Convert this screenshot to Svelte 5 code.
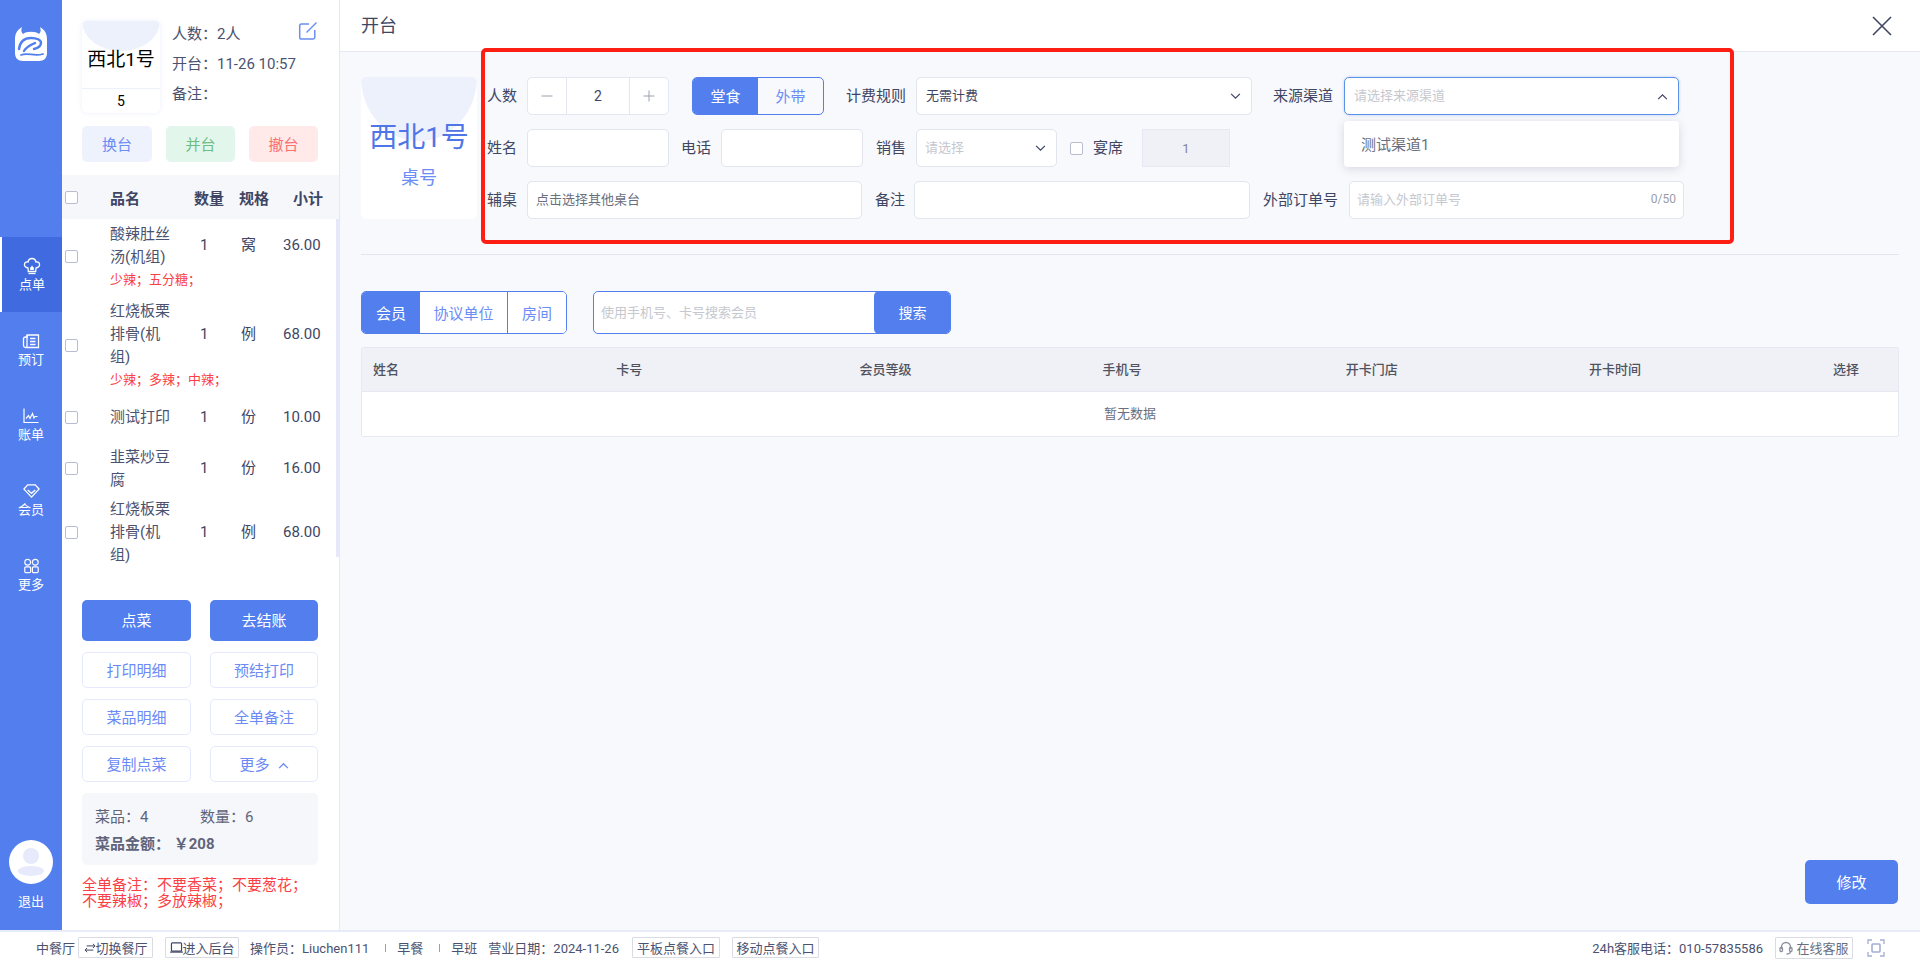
<script>
  const items = [
    { name: '酸辣肚丝汤(机组)', qty: 1, unit: '窝', price: '36.00', note: '少辣；五分糖；' },
    { name: '红烧板栗排骨(机组)', qty: 1, unit: '例', price: '68.00', note: '少辣；多辣；中辣；' },
    { name: '测试打印', qty: 1, unit: '份', price: '10.00', single: true },
    { name: '韭菜炒豆腐', qty: 1, unit: '份', price: '16.00' },
    { name: '红烧板栗排骨(机组)', qty: 1, unit: '例', price: '68.00' }
  ];
  const cols = ['姓名', '卡号', '会员等级', '手机号', '开卡门店', '开卡时间'];
</script>

<div class="page">
  <div class="top">
    <aside class="nav">
      <svg class="logo" viewBox="0 0 34 36" aria-hidden="true">
        <path fill="#fff" d="M8 1C3 4 1 8 1 13V27C1 32 4 35 9 35H25C30 35 33 32 33 27V13C33 8 31 4 26 1C27 4 27 6 25 8C22 5 12 5 9 8C7 6 7 4 8 1Z"/>
        <g fill="none" stroke="#527eee" stroke-linecap="round">
          <path stroke-width="2.400" d="M5 23C6 16 10 12 17 12C23 12 27 14 27 17C27 20 24 22 20 23"/>
          <path stroke-width="2.400" d="M10 25C13 20 17 19 21 17"/>
          <path stroke-width="1.800" d="M7 29C14 26 20 31 29 28"/>
        </g>
      </svg>
      <div class="nav-list">
        <div class="nav-item active">
          <svg viewBox="0 0 18 18" width="18" height="18" fill="none" stroke="#fff" stroke-width="1.300"><path d="M5 11C2.500 10.500 1 9 1.500 6.800 2 5 4 4.500 5 5 5.500 2.500 7.500 1.500 9 1.500S12.500 2.500 13 5c1-.5 3 0 3.500 1.800C17 9 15.500 10.500 13 11l-.3 3.500H5.300z"/><path d="M5.500 16.500h7" /><path fill="#fff" stroke="none" d="M7 11l2-2.500 2 2.500-.3 2H7.300z"/></svg>
          <span>点单</span>
        </div>
        <div class="nav-item">
          <svg viewBox="0 0 18 18" width="18" height="18" fill="none" stroke="#fff" stroke-width="1.300"><path d="M5 3h11.500v12.500H3.500A2 2 0 0 1 1.500 13.500V6.500A2 2 0 0 1 3.500 5H5z"/><path d="M5 3v12.500M8 6.500h5.500M8 9.500h5.500M8 12.500h5.500"/></svg>
          <span>预订</span>
        </div>
        <div class="nav-item chart">
          <svg viewBox="0 0 16 16" width="16" height="16" fill="none" stroke="#fff" stroke-width="1.200"><path d="M1 .5v14h14.500"/><path d="M3 10.500l2.500-3 1.500 3 2.500-5 1.500 4.500 1-1.500h2.500"/></svg>
          <span>账单</span>
        </div>
        <div class="nav-item gem">
          <svg viewBox="0 0 18 16" width="17" height="15" fill="none" stroke="#fff" stroke-width="1.400"><path d="M5 1.500h8l4 4.500-8 8.500-8-8.500z"/><path d="M5 7l4 3.500L13 7"/></svg>
          <span>会员</span>
        </div>
        <div class="nav-item more">
          <svg viewBox="0 0 15 15" width="15" height="15" fill="none" stroke="#fff" stroke-width="1.200"><circle cx="3.700" cy="3.700" r="2.900"/><circle cx="11.300" cy="3.700" r="2.900"/><rect x=".8" y="8.300" width="5.800" height="5.800" rx="1.200"/><rect x="8.400" y="8.300" width="5.800" height="5.800" rx="1.200"/></svg>
          <span>更多</span>
        </div>
      </div>
      <div class="logout">
        <div class="avatar">
          <svg viewBox="0 0 44 44" width="44" height="44"><circle cx="22" cy="16" r="8" fill="#e7eafa"/><ellipse cx="22" cy="31" rx="13" ry="5" fill="#e7eafa"/></svg>
        </div>
        <span>退出</span>
      </div>
    </aside>

    <section class="panel">
      <div class="table-info">
        <div class="table-card">
          <div class="cap"></div>
          <div class="tname">西北1号</div>
          <div class="tnum">5</div>
        </div>
        <div class="info-lines">
          <div>人数：2人</div>
          <div>开台：11-26 10:57</div>
          <div>备注：</div>
        </div>
        <svg class="edit" viewBox="0 0 20 20" width="20" height="20" fill="none" stroke="#6b8ff2" stroke-width="1.500"><path d="M11 3H3.500A1.800 1.800 0 0 0 1.700 4.800v11.500a1.800 1.800 0 0 0 1.800 1.800H15a1.800 1.800 0 0 0 1.800-1.800V9"/><path d="M8.500 11.500L18.500 1.500"/></svg>
      </div>
      <div class="tint-btns">
        <button class="t-blue">换台</button>
        <button class="t-green">并台</button>
        <button class="t-red">撤台</button>
      </div>
      <div class="list-head">
        <span class="cb"></span>
        <span class="h-name">品名</span>
        <span class="h-qty">数量</span>
        <span class="h-unit">规格</span>
        <span class="h-sub">小计</span>
      </div>
      <div class="list">
        <div class="scrollbar"></div>
        {#each items as it}
          <div class="row" class:single={it.single} class:noted={it.note}>
            <span class="cb"></span>
            <span class="r-name">{it.name}</span>
            <span class="r-qty">{it.qty}</span>
            <span class="r-unit">{it.unit}</span>
            <span class="r-price">{it.price}</span>
            {#if it.note}<span class="r-note">{it.note}</span>{/if}
          </div>
        {/each}
      </div>
      <div class="actions">
        <button class="solid h41">点菜</button>
        <button class="solid h41">去结账</button>
        <button class="outline">打印明细</button>
        <button class="outline">预结打印</button>
        <button class="outline">菜品明细</button>
        <button class="outline">全单备注</button>
        <button class="outline">复制点菜</button>
        <button class="outline">更多<svg viewBox="0 0 12 8" width="11" height="7" fill="none" stroke="#6b8af5" stroke-width="1.500"><path d="M1 7l5-5 5 5"/></svg></button>
      </div>
      <div class="summary">
        <div class="sum-top"><span>菜品：4</span><span>数量：6</span></div>
        <div class="sum-total">菜品金额： ￥208</div>
      </div>
      <div class="order-note">全单备注：不要香菜；不要葱花；不要辣椒；多放辣椒；</div>
    </section>

    <main class="main">
      <header class="bar">
        <span>开台</span>
        <svg viewBox="0 0 20 20" width="20" height="20" fill="none" stroke="#3f4664" stroke-width="1.600"><path d="M1 1l18 18M19 1L1 19"/></svg>
      </header>
      <div class="content">
        <div class="open-row">
          <div class="big-card">
            <div class="big-cap"></div>
            <div class="big-name">西北1号</div>
            <div class="big-sub">桌号</div>
          </div>
          <div class="form">
            <div class="f-row">
              <label class="l1">人数</label>
              <div class="stepper">
                <span class="st-btn"><svg viewBox="0 0 12 12" width="12" height="12" stroke="#9ba0ad" stroke-width="1"><path d="M.5 6h11"/></svg></span>
                <span class="st-val">2</span>
                <span class="st-btn"><svg viewBox="0 0 12 12" width="12" height="12" stroke="#9ba0ad" stroke-width="1"><path d="M.5 6h11M6 .5v11"/></svg></span>
              </div>
              <div class="seg"><span class="on">堂食</span><span>外带</span></div>
              <label class="l2">计费规则</label>
              <div class="field sel w336"><span>无需计费</span><svg class="chev" viewBox="0 0 12 8" width="11" height="7" fill="none" stroke="#3f4664" stroke-width="1.400"><path d="M1 1l5 5 5-5"/></svg></div>
              <label class="l3">来源渠道</label>
              <div class="field sel focus"><span class="ph">请选择来源渠道</span><svg class="chev" viewBox="0 0 12 8" width="11" height="7" fill="none" stroke="#3f4664" stroke-width="1.400"><path d="M1 7l5-5 5 5"/></svg>
                <div class="drop">测试渠道1</div>
              </div>
            </div>
            <div class="f-row">
              <label class="l1">姓名</label>
              <div class="field w142"></div>
              <label class="l4">电话</label>
              <div class="field w142"></div>
              <label class="l5">销售</label>
              <div class="field sel w141"><span class="ph">请选择</span><svg class="chev" viewBox="0 0 12 8" width="11" height="7" fill="none" stroke="#3f4664" stroke-width="1.400"><path d="M1 1l5 5 5-5"/></svg></div>
              <span class="cb banquet"></span>
              <label class="l6">宴席</label>
              <div class="disabled">1</div>
            </div>
            <div class="f-row">
              <label class="l1">辅桌</label>
              <div class="field w335"><span class="fill13">点击选择其他桌台</span></div>
              <label class="l7">备注</label>
              <div class="field w336b"></div>
              <label class="l8">外部订单号</label>
              <div class="field ext"><span class="ph">请输入外部订单号</span><span class="count">0/50</span></div>
            </div>
          </div>
        </div>
        <div class="rule"></div>
        <div class="search-row">
          <div class="tabs"><span class="on">会员</span><span>协议单位</span><span>房间</span></div>
          <div class="search"><span class="ph">使用手机号、卡号搜索会员</span><button>搜索</button></div>
        </div>
        <div class="member">
          <div class="m-head">
            {#each cols as c}<span>{c}</span>{/each}
            <span class="m-last">选择</span>
          </div>
          <div class="m-empty">暂无数据</div>
        </div>
        <div class="save"><button>修改</button></div>
      </div>
      <div class="redbox"></div>
    </main>
  </div>

  <footer class="foot">
    <span class="f-a">中餐厅</span>
    <span class="tag t1"><svg viewBox="0 0 14 12" width="12" height="10" fill="none" stroke="#3f4664" stroke-width="1.200"><path d="M1 8.500h10M3.500 6L1 8.500 3.500 11M13 3.500H3M10.500 1L13 3.500 10.500 6"/></svg>切换餐厅</span>
    <span class="tag t2"><svg viewBox="0 0 14 12" width="13" height="11" fill="none" stroke="#3f4664" stroke-width="1.300"><rect x="1.500" y="1" width="11" height="9" rx="1"/><path d="M0 11h14"/></svg>进入后台</span>
    <span class="f-b">操作员：Liuchen111</span>
    <i class="pipe"></i>
    <span>早餐</span>
    <i class="pipe"></i>
    <span>早班</span>
    <span class="f-c">营业日期：2024-11-26</span>
    <span class="tag t3">平板点餐入口</span>
    <span class="tag t4">移动点餐入口</span>
    <span class="f-phone">24h客服电话：010-57835586</span>
    <span class="tag t5"><svg viewBox="0 0 14 14" width="14" height="14" fill="none" stroke="#8b8f9c" stroke-width="1.300"><path d="M2.500 8V6a4.500 4.500 0 0 1 9 0v2"/><rect x="1" y="6.500" width="2.500" height="4" rx="1"/><rect x="10.500" y="6.500" width="2.500" height="4" rx="1"/><path d="M11.500 10.500c0 1.800-1.500 2.500-4 2.500"/></svg>在线客服</span>
    <svg class="fs" viewBox="0 0 18 18" width="18" height="18" fill="none" stroke="#a3aed3" stroke-width="1.300"><path d="M1 5V1h4M13 1h4v4M17 13v4h-4M5 17H1v-4"/><rect x="5" y="5" width="8" height="8" rx="1" stroke-width="1.600"/></svg>
  </footer>
</div>

<style>
  :global(body) { margin: 0; }
  .page {
    width: 1920px; height: 963px; display: flex; flex-direction: column; overflow: hidden;
    font-family: Roboto, "Noto Sans CJK SC", sans-serif; font-size: 15px; color: #3f4664;
  }
  button { font: inherit; border: 0; padding: 0 0 2px; cursor: pointer; }
  .top { display: flex; height: 930px; }

  /* side nav */
  .nav { width: 62px; background: #527eee; color: #fff; display: flex; flex-direction: column; align-items: center; flex: none; }
  .logo { width: 34px; height: 36px; margin-top: 26px; flex: none; }
  .nav-list { margin-top: 175px; width: 100%; display: flex; flex-direction: column; }
  .nav-item { height: 75px; display: flex; flex-direction: column; align-items: center; font-size: 13px; line-height: 18px; padding-top: 20px; box-sizing: border-box; gap: 0; }
  .nav-item svg { flex: none; height: 18px; margin-bottom: 1px; }
  .nav-item.active { background: #3f6ae0; border-left: 2px solid #fff; }
  .logout { margin-top: auto; margin-bottom: 19px; display: flex; flex-direction: column; align-items: center; font-size: 13px; gap: 9px; line-height: 18px; }
  .avatar { width: 44px; height: 44px; border-radius: 50%; background: #fff; }

  /* order panel */
  .panel { width: 277px; flex: none; background: #fff; border-right: 1px solid #e6e9f5; display: flex; flex-direction: column; }
  .table-info { display: flex; padding: 21px 0 0 20px; position: relative; height: 92px; }
  .table-card { width: 78px; height: 92px; border-radius: 5px; background: #fff; box-shadow: 0 0 5px rgba(110, 130, 220, .12); position: relative; display: flex; flex-direction: column; align-items: center; overflow: hidden; color: #000; }
  .cap { position: absolute; left: 0; right: 0; top: 0; height: 30px; background: #edf1fc; border-radius: 0 0 39px 39px / 0 0 30px 30px; }
  .tname { position: relative; font-size: 19px; line-height: 24px; margin-top: 27px; white-space: nowrap; height: 40px; flex: none; }
  .tnum { border-top: 1px solid #edf1fc; width: 100%; text-align: center; font-size: 14px; line-height: 24px; }
  .info-lines { margin-left: 12px; font-size: 15px; line-height: 30px; margin-top: -2px; color: #4b5270; }
  .edit { position: absolute; left: 236px; top: 21px; }
  .tint-btns { display: flex; padding-left: 20px; margin-top: 13px; gap: 14px; }
  .tint-btns button { width: 69px; height: 36px; border-radius: 5px; font-size: 15px; }
  .tint-btns .t-blue { width: 70px; }
  .t-blue { background: #eef2fd; color: #6b8df5; }
  .t-green { background: #e3f6ec; color: #6dbd83; }
  .t-red { background: #ffe9e9; color: #fb6f6f; }
  .list-head { margin-top: 13px; height: 44px; background: #f6f7fb; display: flex; align-items: center; font-weight: 700; font-size: 15px; padding-left: 3px; flex: none; }
  .cb { width: 11px; height: 11px; border: 1px solid #b9bdd0; border-radius: 2px; background: #fff; flex: none; display: block; }
  .h-name { margin-left: 32px; width: 84px; }
  .h-qty { width: 45px; }
  .h-unit { width: 54px; }
  .list { position: relative; height: 351px; overflow: hidden; flex: none; }
  .scrollbar { position: absolute; right: 0; top: 0; width: 3px; height: 338px; background: #e6e9fa; }
  .row { display: grid; grid-template-columns: 45px 64px 50px 41px 1fr; padding: 3.500px 0 3px 3px; align-items: center; font-size: 15px; line-height: 23px; }
  .row.noted { padding-bottom: 6px; }
  .row.noted .cb { grid-row: 1 / span 2; }
  .row.single { padding: 9px 0 13px 3px; }
  .r-name { color: #4b5270; }
  .r-qty { padding-left: 26px; }
  .r-unit { padding-left: 17px; }
  .r-price { padding-left: 18px; }
  .r-note { grid-column: 2 / -1; font-size: 13px; line-height: 22px; color: #fb3f46; white-space: nowrap; }
  .actions { display: grid; grid-template-columns: 109px 108px; column-gap: 19px; row-gap: 11px; padding-left: 20px; margin-top: 30px; }
  .actions button { height: 36px; border-radius: 5px; font-size: 15px; }
  .actions .h41 { height: 41px; }
  .solid { background: #527eee; color: #fff; }
  .outline { background: #fff; border: 1px solid #e6e9fd; color: #6b8af5; box-sizing: border-box; }
  .outline svg { margin-left: 8px; vertical-align: 1px; }
  .summary { margin: 11px 0 0 20px; width: 236px; height: 72px; background: #f6f7fb; border-radius: 5px; box-sizing: border-box; padding: 12px 13px; font-size: 15px; color: #60647a; }
  .sum-top { display: grid; grid-template-columns: 105px 1fr; line-height: 24px; }
  .sum-total { font-weight: 700; line-height: 24px; margin-top: 3px; }
  .order-note { margin: 12px 19px 0 20px; color: #fb3f46; font-size: 15px; line-height: 16px; }

  /* main */
  .main { flex: 1; background: #f8f9fc; position: relative; display: flex; flex-direction: column; }
  .bar { height: 51px; flex: none; background: #fff; border-bottom: 1px solid #e6e9f3; display: flex; align-items: center; justify-content: space-between; padding: 0 28px 0 21px; font-size: 18px; box-sizing: content-box; }
  .bar span { padding-bottom: 3px; }
  .content { flex: 1; padding: 25px 21px 26px 21px; display: flex; flex-direction: column; min-height: 0; }
  .open-row { display: flex; flex: none; }
  .big-card { width: 116px; height: 142px; background: #fff; border-radius: 5px; position: relative; overflow: hidden; display: flex; flex-direction: column; align-items: center; color: #6b8df5; flex: none; }
  .big-cap { position: absolute; top: 0; left: 0; right: 0; height: 64px; background: #edf1fc; border-radius: 0 0 58px 58px / 0 0 64px 64px; }
  .big-name { position: relative; font-size: 28px; line-height: 40px; margin-top: 41px; color: #4f75e6; white-space: nowrap; }
  .big-sub { position: relative; font-size: 18px; line-height: 24px; margin-top: 8px; }
  .form { display: flex; flex-direction: column; }
  .f-row { height: 38px; margin-bottom: 14px; display: flex; align-items: center; }
  .f-row label { white-space: nowrap; font-size: 15px; color: #3f4664; padding-bottom: 3px; }
  .l1 { margin-left: 10px; width: 40px; }
  .stepper { width: 142px; height: 38px; box-sizing: border-box; border: 1px solid #e4e7f2; border-radius: 5px; background: #fff; display: flex; font-size: 14px; }
  .st-btn { width: 38px; display: flex; align-items: center; justify-content: center; }
  .st-val { flex: 1; border-left: 1px solid #e4e7f2; border-right: 1px solid #e4e7f2; display: flex; align-items: center; justify-content: center; }
  .seg { margin-left: 23px; width: 132px; height: 38px; box-sizing: border-box; border: 1px solid #527eee; border-radius: 5px; display: flex; overflow: hidden; font-size: 15px; color: #6b8df5; }
  .seg span { flex: 1; display: flex; align-items: center; justify-content: center; padding-bottom: 1px; }
  .seg .on { background: #527eee; color: #fff; }
  .l2 { margin-left: 22px; width: 70px; }
  .l3 { margin-left: 21px; width: 71px; }
  .l4 { margin-left: 12px; width: 40px; }
  .l5 { margin-left: 13px; width: 40px; }
  .l6 { margin-left: 10px; width: 49px; }
  .l7 { margin-left: 13px; width: 39px; }
  .l8 { margin-left: 13px; width: 86px; }
  .field { position: relative; height: 38px; box-sizing: border-box; border: 1px solid #e2e4ee; border-radius: 5px; background: #fff; display: flex; align-items: center; font-size: 13px; padding: 0 9px; flex: none; }
  .field > span { padding-bottom: 3px; }
  .sel { justify-content: space-between; }
  .w142 { width: 142px; }
  .w141 { width: 141px; padding-left: 8px; }
  .w336 { width: 336px; }
  .w335 { width: 335px; padding-left: 8px; }
  .w336b { width: 336px; }
  .ext { width: 335px; padding-left: 7px; padding-right: 7px; }
  .focus { width: 335px; border-color: #5a93e8; box-shadow: 0 0 3px rgba(90, 147, 232, .4); }
  .ph { color: #c6c8cf; }
  .fill13 { color: #6a6f80; }
  .chev { margin-right: 1px; }
  .count { margin-left: auto; color: #9a9da8; font-size: 12px; }
  .drop { position: absolute; left: -1px; top: 43px; width: 335px; height: 46px; box-sizing: border-box; background: #fff; border-radius: 4px; box-shadow: 0 2px 10px rgba(60, 70, 110, .18); display: flex; align-items: center; padding: 0 0 2px 17px; font-size: 15px; color: #6a6f80; z-index: 2; }
  .banquet { margin-left: 13px; }
  .disabled { width: 88px; height: 38px; box-sizing: border-box; border: 1px solid #e6e9f3; background: #f0f1f6; display: flex; align-items: center; justify-content: center; font-size: 13px; color: #80849a; }
  .rule { height: 1px; background: #e3e6ef; margin-top: 21px; flex: none; }
  .search-row { display: flex; margin-top: 36px; flex: none; }
  .tabs { width: 206px; height: 43px; box-sizing: border-box; border: 1px solid #527eee; border-radius: 5px; display: flex; overflow: hidden; font-size: 15px; color: #6b8df5; }
  .tabs span { display: flex; align-items: center; justify-content: center; background: #fff; width: 59px; }
  .tabs span:nth-child(2) { width: 88px; border-right: 1px solid #527eee; }
  .tabs .on { background: #527eee; color: #fff; }
  .search { margin-left: 26px; width: 358px; height: 43px; box-sizing: border-box; border: 1px solid #527eee; border-radius: 5px; background: #fff; display: flex; align-items: center; justify-content: space-between; padding-left: 7px; font-size: 13px; overflow: hidden; }
  .search .ph { padding-bottom: 2px; }
  .search button { width: 77px; height: 43px; background: #527eee; color: #fff; border-radius: 5px; font-size: 14px; margin-right: -1px; }
  .member { margin-top: 13px; border: 1px solid #e6e9f3; border-radius: 2px; background: #fff; flex: none; }
  .m-head { height: 44px; background: #eff1f6; border-bottom: 1px solid #e6e9f3; display: grid; grid-template-columns: repeat(6, 243.200px) 1fr; align-items: center; padding: 0 0 3px 11px; box-sizing: border-box; font-size: 13px; font-weight: 500; color: #50535f; }
  .m-last { text-align: right; padding-right: 39px; }
  .m-empty { height: 44px; padding-bottom: 3px; box-sizing: border-box; display: flex; align-items: center; justify-content: center; font-size: 13px; color: #6a6f80; }
  .save { margin-top: auto; display: flex; justify-content: flex-end; padding-right: 1px; }
  .save button { width: 93px; height: 44px; background: #527eee; color: #fff; border-radius: 5px; font-size: 15px; }
  .redbox { position: absolute; left: 141px; top: 48px; width: 1253px; height: 196px; box-sizing: border-box; border: 4px solid #fe1f14; border-radius: 5px; pointer-events: none; z-index: 3; }

  /* footer */
  .foot { height: 33px; box-sizing: border-box; border-top: 2px solid #e8ebfa; background: #fff; display: flex; align-items: center; font-size: 13px; padding-left: 36px; white-space: nowrap; color: #4b5270; flex: none; }
  .tag { height: 21px; box-sizing: border-box; border: 1px solid #dadce3; border-radius: 1px; display: inline-flex; align-items: center; justify-content: center; font-size: 13px; background: #fff; }
  .t1 { width: 75px; margin-left: 3px; }
  .t2 { width: 74px; margin-left: 12px; }
  .f-b { margin-left: 11px; }
  .pipe { display: block; width: 1px; height: 8px; background: #9aa0b8; margin: 0 11px 0 16px; }
  .f-c { margin-left: 11px; }
  .t3 { width: 88px; margin-left: 13px; }
  .t4 { width: 87px; margin-left: 12px; }
  .f-phone { margin-left: auto; }
  .t5 { width: 78px; margin-left: 12px; color: #6a6f80; gap: 3px; height: 22px; }
  .fs { margin: 0 35px 0 14px; }
</style>
